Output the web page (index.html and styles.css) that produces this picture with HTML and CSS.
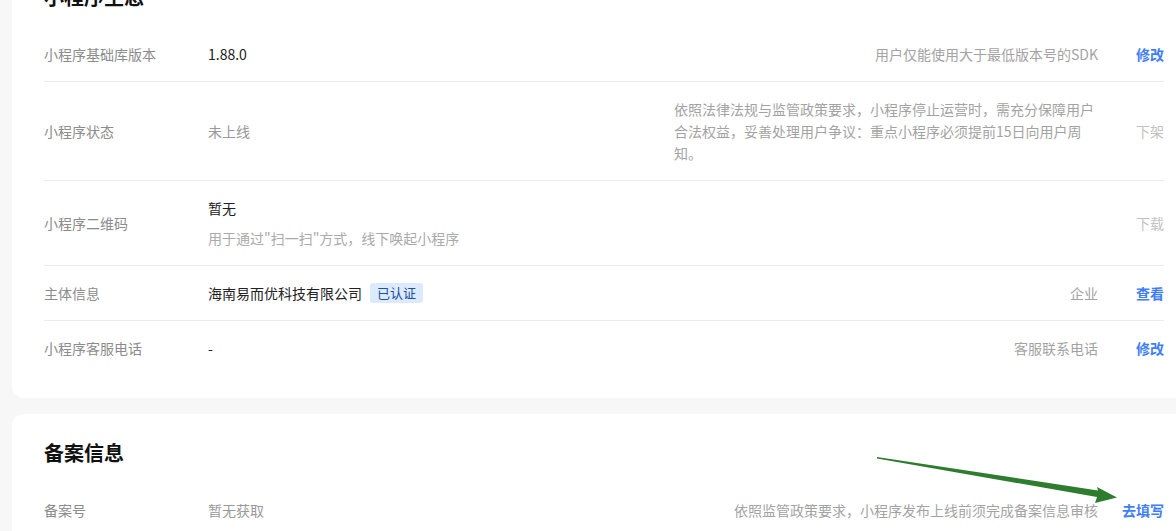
FILE: index.html
```html
<!DOCTYPE html>
<html lang="zh-CN">
<head>
<meta charset="utf-8">
<title>小程序生态</title>
<link rel="stylesheet" href="styles.css">
</head>
<body>
<div class="page">
  <section class="card card-first">
    <h2 class="card-title">小程序生态</h2>
    <div class="row">
      <div class="label">小程序基础库版本</div>
      <div class="value">1.88.0</div>
      <div class="desc">用户仅能使用大于最低版本号的SDK</div>
      <div class="action"><a class="link">修改</a></div>
    </div>
    <div class="row">
      <div class="label">小程序状态</div>
      <div class="value muted">未上线</div>
      <div class="desc">依照法律法规与监管政策要求，小程序停止运营时，需充分保障用户合法权益，妥善处理用户争议：重点小程序必须提前15日向用户周知。</div>
      <div class="action"><a class="link disabled">下架</a></div>
    </div>
    <div class="row">
      <div class="label">小程序二维码</div>
      <div class="value">
        <div>暂无</div>
        <div class="sub">用于通过"扫一扫"方式，线下唤起小程序</div>
      </div>
      <div class="action"><a class="link disabled">下载</a></div>
    </div>
    <div class="row">
      <div class="label">主体信息</div>
      <div class="value">海南易而优科技有限公司<span class="tag">已认证</span></div>
      <div class="desc">企业</div>
      <div class="action"><a class="link">查看</a></div>
    </div>
    <div class="row">
      <div class="label">小程序客服电话</div>
      <div class="value">-</div>
      <div class="desc">客服联系电话</div>
      <div class="action"><a class="link">修改</a></div>
    </div>
  </section>

  <section class="card">
    <h2 class="card-title">备案信息</h2>
    <div class="row">
      <div class="label">备案号</div>
      <div class="value muted">暂无获取</div>
      <div class="desc">依照监管政策要求，小程序发布上线前须完成备案信息审核</div>
      <div class="action"><a class="link">去填写</a><span class="hint">追加备案</span></div>
    </div>
  </section>
</div>

<svg class="annot" width="1176" height="531" viewBox="0 0 1176 531" aria-hidden="true">
  <polygon points="877,457 1098,490.5 1097,487 1117,497.5 1095,503 1097,497 877,458.6" fill="#2e7d2e"/>
</svg>
</body>
</html>
```

FILE: styles.css
```css
html, body {
  margin: 0;
  padding: 0;
}

body {
  position: relative;
  width: 1176px;
  height: 531px;
  overflow: hidden;
  background: #f7f7f7;
  font-family: "Noto Sans CJK SC", "Noto Sans", "Liberation Sans", sans-serif;
  font-size: 14px;
  line-height: 22px;
  color: #222;
}

.page {
  padding-left: 12px;
  margin-top: -42px;
  display: flex;
  flex-direction: column;
  gap: 16px;
}

.card {
  background: #fff;
  border-radius: 12px;
  margin-right: -20px;
  padding: 24px 32px 23px;
}

.card-title {
  margin: 0 0 15px;
  font-size: 20px;
  line-height: 30px;
  font-weight: 700;
  color: #111;
}

.row {
  display: flex;
  align-items: center;
  padding: 16px 0;
}

.row + .row {
  border-top: 1px solid #ebebeb;
}

.label {
  width: 164px;
  flex: none;
  color: #8c8c8c;
}

.value {
  flex: 1;
  min-width: 0;
  color: #222;
}

.value.muted {
  color: #999;
}

.sub {
  margin-top: 8px;
  color: #aaa;
}

.tag {
  display: inline-block;
  margin-left: 8px;
  padding: 0 7px;
  font-size: 13px;
  line-height: 20px;
  border-radius: 3px;
  background: #dbeafc;
  color: #1d4f9c;
  vertical-align: 1px;
}

.desc {
  flex: none;
  max-width: 424px;
  color: #a3a3a3;
}

.action {
  position: relative;
  width: 66px;
  flex: none;
  text-align: right;
}

.link {
  color: #3f7ef8;
  font-weight: 600;
  cursor: pointer;
}

.link.disabled {
  color: #c2c2c2;
  font-weight: 400;
}

.hint {
  position: absolute;
  left: 26px;
  top: 30px;
  font-size: 12px;
  color: #c2c2c2;
  white-space: nowrap;
}

.annot {
  position: absolute;
  left: 0;
  top: 0;
  pointer-events: none;
}
```
